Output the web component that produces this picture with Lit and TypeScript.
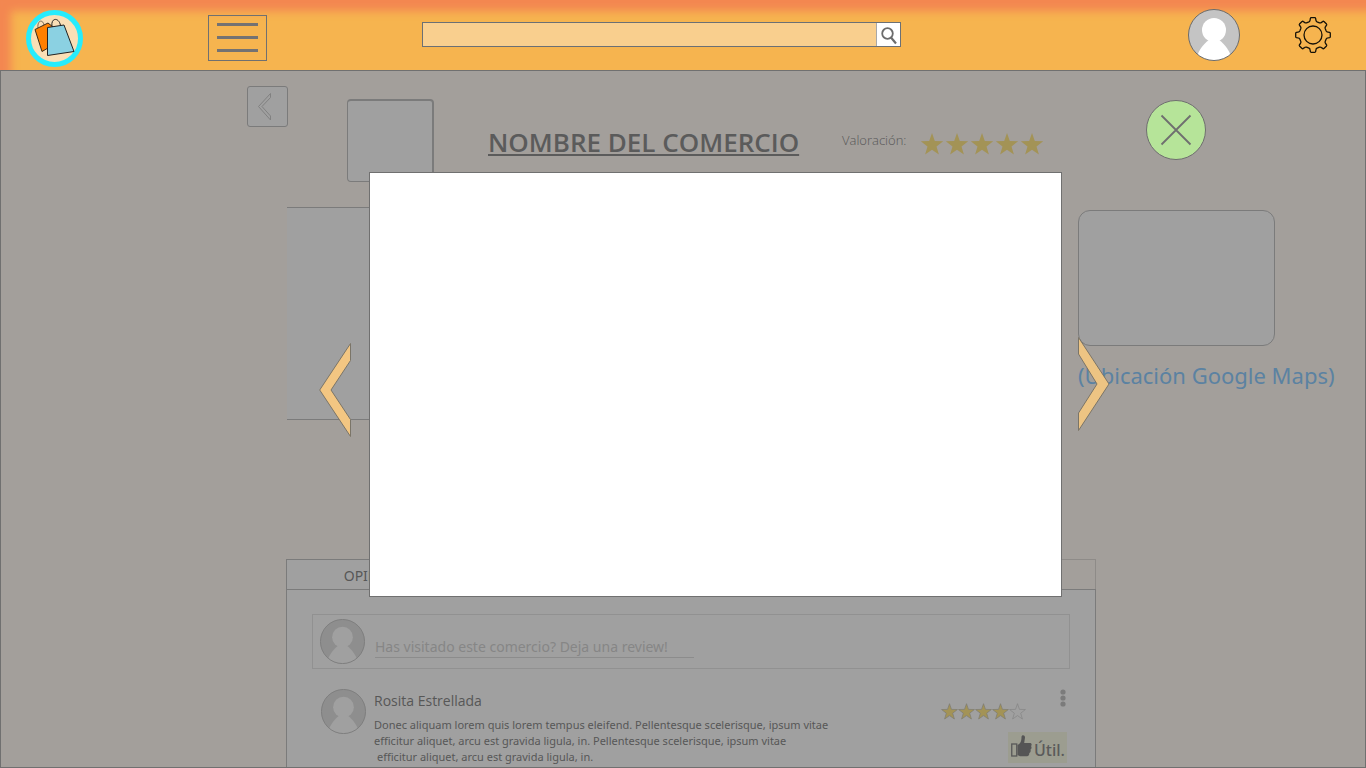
import { LitElement, html, css, svg } from "lit";
import { customElement, property } from "lit/decorators.js";

const STAR = "M12 1 L14.8 9 L23.2 9.2 L16.5 14.4 L18.9 22.6 L12 17.8 L5.1 22.6 L7.5 14.4 L0.8 9.2 L9.2 9 Z";

const gearOutline = (): string => {
  const at = (deg: number, r: number): string => {
    const a = (deg * Math.PI) / 180;
    return `${(18 + r * Math.sin(a)).toFixed(2)} ${(18 - r * Math.cos(a)).toFixed(2)}`;
  };
  let d = "";
  for (let i = 0; i < 8; i++) {
    const c = i * 45;
    d += `${i ? "L" : "M"}${at(c - 11, 15.2)} L${at(c - 9, 16.8)} Q${at(c - 8, 17.4)} ${at(c - 6, 17.4)}`;
    d += ` L${at(c + 6, 17.4)} Q${at(c + 8, 17.4)} ${at(c + 9, 16.8)} L${at(c + 11, 15.2)}`;
    d += ` Q${at(c + 12.5, 14)} ${at(c + 17, 13.8)} L${at(c + 28, 13.8)} Q${at(c + 32.5, 14)} ${at(c + 34, 15.2)} `;
  }
  return d + "Z";
};

@customElement("user-avatar")
export class UserAvatar extends LitElement {
  static styles = css`
    :host { display: block; flex: none; width: 45px; height: 45px; --ring: #7b7b7b; --back: #8e8e8e; --body: #a0a0a0; }
    :host([bright]) { width: 52px; height: 52px; --ring: #6b6b6b; --back: #c4c4c4; --body: #ffffff; }
    .pic { display: block; width: 100%; height: 100%; }
    .back { fill: var(--back); }
    .body { fill: var(--body); }
    .ring { fill: none; stroke: var(--ring); stroke-width: 1; }
  `;
  render() {
    return html`<svg class="pic" viewBox="0 0 52 52" aria-hidden="true">
      <defs><clipPath id="round"><circle cx="26" cy="26" r="25.5" /></clipPath></defs>
      <circle class="back" cx="26" cy="26" r="25.5" />
      <g class="body" clip-path="url(#round)">
        <circle cx="26" cy="21" r="12" />
        <path d="M7 54 C9 44 14 36 21 31 H31 C38 36 43 44 45 54 Z" />
      </g>
      <circle class="ring" cx="26" cy="26" r="25.5" />
    </svg>`;
  }
}

@customElement("star-rating")
export class StarRating extends LitElement {
  @property({ type: Number }) value = 5;
  @property({ type: Boolean, reflect: true }) outlined = false;
  static styles = css`
    :host { display: flex; flex: none; gap: 1px; }
    :host([outlined]) { gap: 0; }
    .star { width: 24px; height: 24px; fill: #a39356; overflow: visible; }
    :host([outlined]) .star { width: 17px; height: 17px; stroke: #7d7b72; stroke-width: 1; }
    :host([outlined]) .empty { fill: none; stroke: #848484; }
  `;
  render() {
    return [1, 2, 3, 4, 5].map(
      (n) => html`<svg class="star ${n > this.value ? "empty" : ""}" viewBox="0 0 24 24" aria-hidden="true">${svg`<path d=${STAR} />`}</svg>`
    );
  }
}

@customElement("top-bar")
export class TopBar extends LitElement {
  static styles = css`
    :host { display: block; }
    .bar {
      display: flex; align-items: center; box-sizing: border-box; height: 70px; padding: 0 35px 0 26px;
      background: #f6b44f; box-shadow: inset 11px 11px 9px #f38751;
    }
    .left { display: flex; align-items: center; gap: 125px; padding-top: 7px; }
    .logo, .logo svg { display: block; width: 57px; height: 57px; }
    button { padding: 0; margin: 0; cursor: pointer; }
    .menu {
      display: flex; flex-direction: column; justify-content: center; align-items: center; gap: 10px;
      box-sizing: border-box; width: 59px; height: 46px; margin-bottom: 2px; background: none; border: 1px solid #707070;
    }
    .line { width: 41px; height: 3px; background: #747272; }
    .search {
      display: flex; flex: 1; box-sizing: border-box; height: 25px; margin: 0 287px 1px 155px;
      border: 1px solid #6b7075;
    }
    .query { flex: 1; min-width: 0; border: 0; padding: 0 8px; background: #f9cf8e; font: 14px "Open Sans", sans-serif; outline: none; }
    .go { width: 24px; border: 0; border-left: 1px solid #a8a8a8; background: #fff; }
    .go svg { display: block; width: 23px; height: 23px; }
    .settings { margin-left: 55px; border: 0; background: none; }
    .settings svg { display: block; width: 36px; height: 36px; overflow: visible; }
  `;
  render() {
    return html`<header class="bar">
      <div class="left">
        <a class="logo" href="#" aria-label="Inicio">
          <svg viewBox="0 0 57 57">
            <circle cx="28.5" cy="28.5" r="26" fill="#fadfb6" stroke="#27ecfc" stroke-width="5" />
            <path d="M12 18 C11 10 17 9 18 15" fill="none" stroke="#7c6c55" stroke-width="1" />
            <path d="M9 19.5 L22 13 L27 17 L22 38 L16 41.5 Z" fill="#ff8000" stroke="#3a2a18" stroke-width="1" />
            <path d="M21.5 17.5 L38 15 L48 41.5 L21.5 45.5 Z" fill="#8bd1e2" stroke="#222" stroke-width="1" />
            <path d="M26 16.5 C24.5 7.5 33 7 34.5 15.5" fill="none" stroke="#222" stroke-width="1" />
          </svg>
        </a>
        <button class="menu" aria-label="Menú"><span class="line"></span><span class="line"></span><span class="line"></span></button>
      </div>
      <form class="search" role="search">
        <input class="query" type="text" aria-label="Buscar" />
        <button class="go" type="button" aria-label="Buscar">
          <svg viewBox="0 0 23 23" fill="none" stroke="#6c6c6c">
            <circle cx="10.5" cy="10.5" r="5.3" stroke-width="1.8" />
            <path d="M14 14.5 L19 20.5" stroke-width="2.2" />
          </svg>
        </button>
      </form>
      <user-avatar bright></user-avatar>
      <button class="settings" aria-label="Ajustes">
        <svg viewBox="0 0 36 36" fill="none" stroke="#161208" stroke-width="1.3" stroke-linejoin="round">
          <path d=${gearOutline()} /><circle cx="18" cy="18" r="9" />
        </svg>
      </button>
    </header>`;
  }
}

@customElement("review-item")
export class ReviewItem extends LitElement {
  static styles = css`
    :host { display: block; }
    .review { display: flex; padding: 0 3px 0 9px; }
    .words { flex: 1; margin-left: 8px; color: #575757; }
    .name { margin: 0; font-size: 14px; line-height: 24px; font-weight: 400; }
    .text { margin: 4px 0 0; font-family: "Noto Sans", sans-serif; font-size: 11px; line-height: 16px; }
    .last { padding-left: 3px; }
    .side { display: flex; flex-direction: column; align-items: flex-end; gap: 12px; }
    .top { display: flex; align-items: flex-start; gap: 34px; padding-right: 1px; }
    star-rating { margin-top: 14px; }
    .more { display: block; padding: 0; border: 0; background: none; }
    .more svg { display: block; width: 6px; height: 18px; }
    .useful {
      display: flex; align-items: center; width: 59px; height: 31px; box-sizing: border-box; padding: 0 2px 0 3px; gap: 2px;
      border: 0; background: #9c9d90; color: #5a5a5a; font: 500 16px/31px "Noto Sans", sans-serif;
    }
    .useful svg { flex: none; width: 21px; height: 24px; margin-bottom: 3px; }
    .label { padding-top: 6px; }
  `;
  render() {
    return html`<article class="review">
      <user-avatar></user-avatar>
      <div class="words">
        <h3 class="name">Rosita Estrellada</h3>
        <p class="text">Donec aliquam lorem quis lorem tempus eleifend. Pellentesque scelerisque, ipsum vitae<br />efficitur aliquet, arcu est gravida ligula, in. Pellentesque scelerisque, ipsum vitae<br /><span class="last">efficitur aliquet, arcu est gravida ligula, in.</span></p>
      </div>
      <div class="side">
        <div class="top">
          <star-rating outlined .value=${4}></star-rating>
          <button class="more" aria-label="Más opciones">
            <svg viewBox="0 0 6 18" fill="#7b7b7b"><circle cx="3" cy="3" r="2.6" /><circle cx="3" cy="9" r="2.6" /><circle cx="3" cy="15" r="2.6" /></svg>
          </button>
        </div>
        <button class="useful">
          <svg viewBox="0 0 21 24" aria-hidden="true">
            <rect x="0.75" y="10" width="5" height="12" fill="none" stroke="#585858" stroke-width="1.3" />
            <path d="M6.5 11 C9 10 10.5 8 10.5 3 C10.5 0.5 14 0.5 14 3.5 L13.2 9 H19 C21 9 21 11.5 20 12 C21 13 20.5 15 19.5 15.5 C20 17 19.5 18.5 18.3 19 C18.5 21 17.5 22 16 22.2 H9 L6.5 21 Z" fill="#555" />
          </svg>
          <span class="label">Útil.</span>
        </button>
      </div>
    </article>`;
  }
}

@customElement("photo-viewer")
export class PhotoViewer extends LitElement {
  static styles = css`
    :host { display: block; }
    .viewer { display: flex; align-items: flex-start; padding: 30px 160px 0 319px; }
    button { flex: none; padding: 0; border: 0; background: none; cursor: pointer; }
    svg { display: block; }
    .prev { margin: 243px 18px 0 0; }
    .next { margin: 237px 36px 0 16px; }
    .arrow { width: 32px; height: 94px; overflow: visible; }
    .frame { flex: 1; box-sizing: border-box; height: 425px; margin-top: 72px; background: #fff; border: 1px solid #707070; }
    .close svg { width: 60px; height: 60px; }
  `;
  render() {
    return html`<div class="viewer">
      <button class="prev" aria-label="Anterior">
        <svg class="arrow" viewBox="0 0 32 94" fill="#f3c682" stroke="#7b7568" stroke-width="1">
          <path d="M31.5 0.5 V17.5 L12 47 L31.5 76.5 V93.5 L0.7 47 Z" />
        </svg>
      </button>
      <div class="frame" role="dialog"></div>
      <button class="next" aria-label="Siguiente">
        <svg class="arrow" viewBox="0 0 32 94" fill="#edc483" stroke="#7b7568" stroke-width="1">
          <path d="M0.5 0.5 V17 L19 47 L0.5 76 V93.5 L31 47 Z" />
        </svg>
      </button>
      <button class="close" aria-label="Cerrar">
        <svg viewBox="0 0 60 60" stroke="#6f6f6f">
          <circle cx="30" cy="30" r="29.5" fill="#b6e499" /><path d="M15.5 15.5 L44.5 44.5 M44.5 15.5 L15.5 44.5" stroke-width="1.8" />
        </svg>
      </button>
    </div>`;
  }
}

@customElement("app-root")
export class AppRoot extends LitElement {
  static styles = css`
    :host { display: block; font-family: "Open Sans", "Noto Sans", sans-serif; }
    .page { position: relative; display: flex; flex-direction: column; min-height: 100vh; }
    .shop { display: flex; flex: 1; flex-direction: column; box-sizing: border-box; background: #a39f9b; border: 1px solid #707070; }
    .heading { display: flex; align-items: flex-start; height: 111px; box-sizing: border-box; padding: 15px 0 0 246px; }
    .back { flex: none; width: 41px; height: 41px; padding: 0; background: #a0a0a0; border: 1px solid #7b7b7b; border-radius: 3px; }
    .back svg { display: block; width: 39px; height: 39px; }
    .badge { flex: none; box-sizing: border-box; width: 87px; height: 83px; margin: 13px 54px 0 59px; background: #a0a0a0; border: 1px solid #7b7b7b; border-width: 2px 2px 1px 1px; border-radius: 4px; }
    .title { margin: 38px 42px 0 0; width: 312px; color: #5b5b5b; font-size: 26px; line-height: 36px; font-weight: 600; white-space: nowrap; text-decoration: underline; text-decoration-thickness: 2px; text-underline-offset: 2px; }
    .score { margin: 44px 15px 0 0; width: 63px; color: #575757; font-size: 13px; line-height: 20px; font-weight: 300; white-space: nowrap; }
    .stars { margin-top: 46px; }
    .middle { display: flex; gap: 38px; margin-top: 25px; padding-left: 286px; }
    .gallery { flex: 1; box-sizing: border-box; height: 213px; background: #a0a0a0; border: solid #7b7b7b; border-width: 1px 0; }
    .place { width: 287px; padding-top: 3px; }
    .map { box-sizing: border-box; width: 197px; height: 136px; background: #a0a0a0; border: 1px solid #7b7b7b; border-radius: 12px; }
    .where { display: block; margin-top: 13px; color: #5b82a2; font-family: "Noto Sans", sans-serif; font-size: 22px; line-height: 32px; text-decoration: none; white-space: nowrap; }
    .opinions { display: flex; flex: 1; flex-direction: column; margin: 139px 269px 0 285px; }
    .tabs { display: flex; height: 30px; }
    .tab { width: 192px; box-sizing: border-box; padding: 2px 0 0; background: #a0a0a0; border: solid #7b7b7b; border-width: 1px 1px 0 1px; color: #575757; font: 14px/28px "Noto Sans", sans-serif; }
    .rest { flex: 1; border: solid #8e8b88; border-width: 1px 1px 0 0; }
    .panel { flex: 1; padding: 24px 25px 0; background: #a0a0a0; border: solid #7b7b7b; border-width: 1px 1px 0 1px; }
    .compose { display: flex; box-sizing: border-box; height: 55px; padding: 4px 7px; margin-bottom: 20px; border: 1px solid #919191; }
    .comment { box-sizing: border-box; width: 319px; height: 24px; margin: 15px 0 0 10px; padding: 2px 0 0; border: 0; border-bottom: 1px solid #8c8c8c; background: none; font: 14px/20px "Noto Sans", sans-serif; outline: none; }
    .comment::placeholder { color: #868686; opacity: 1; }
    .overlay { position: absolute; top: 70px; left: 0; right: 0; }
  `;
  render() {
    return html`<div class="page">
      <top-bar></top-bar>
      <main class="shop">
        <div class="heading">
          <button class="back" aria-label="Volver">
            <svg viewBox="0 0 39 39" fill="none" stroke="#818181" stroke-width="1"><path d="M22.5 6.5 V10.5 L14 19.5 L22.5 29 V33 L10.5 19.5 Z" /></svg>
          </button>
          <div class="badge"></div>
          <h1 class="title">NOMBRE DEL COMERCIO</h1>
          <span class="score">Valoración:</span>
          <star-rating class="stars"></star-rating>
        </div>
        <div class="middle">
          <div class="gallery"></div>
          <aside class="place">
            <div class="map"></div>
            <a class="where" href="#">(Ubicación Google Maps)</a>
          </aside>
        </div>
        <section class="opinions">
          <div class="tabs"><button class="tab">OPINIONES</button><div class="rest"></div></div>
          <div class="panel">
            <div class="compose">
              <user-avatar></user-avatar>
              <input class="comment" type="text" aria-label="Review" placeholder="Has visitado este comercio? Deja una review!" />
            </div>
            <review-item></review-item>
          </div>
        </section>
      </main>
      <photo-viewer class="overlay"></photo-viewer>
    </div>`;
  }
}
